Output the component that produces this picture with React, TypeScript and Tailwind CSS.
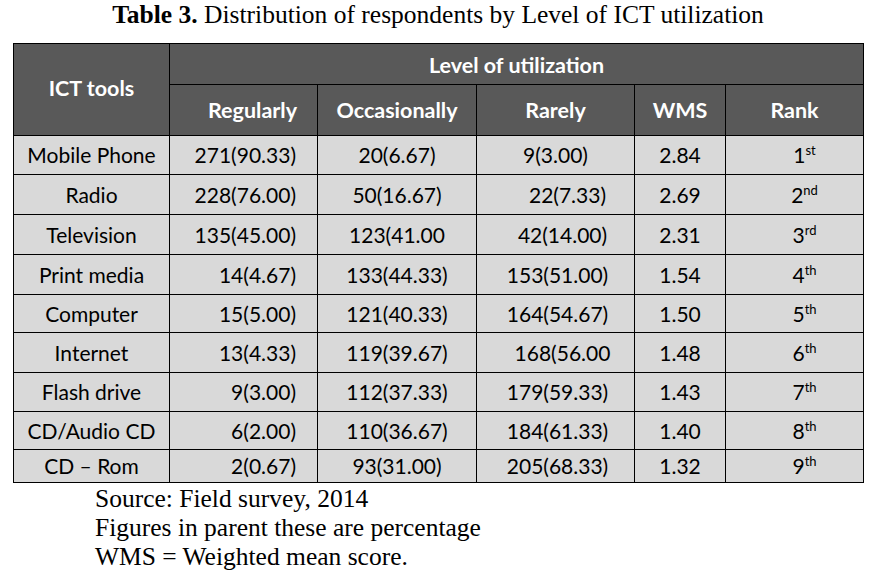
import React from "react";

type Row = {
  tool: string;
  reg: string;
  occ: string;
  rare: string;
  rareShift?: string;
  wms: string;
  rank: string;
  sup: string;
  h: string;
};

const rows: Row[] = [
  { tool: "Mobile Phone", reg: "271(90.33)", occ: "20(6.67)", rare: "9(3.00)", wms: "2.84", rank: "1", sup: "st", h: "h-[39px]" },
  { tool: "Radio", reg: "228(76.00)", occ: "50(16.67)", rare: "22(7.33)", rareShift: "pl-[24px]", wms: "2.69", rank: "2", sup: "nd", h: "h-[40px]" },
  { tool: "Television", reg: "135(45.00)", occ: "123(41.00", rare: "42(14.00)", rareShift: "pl-[14px]", wms: "2.31", rank: "3", sup: "rd", h: "h-[40px]" },
  { tool: "Print media", reg: "14(4.67)", occ: "133(44.33)", rare: "153(51.00)", rareShift: "pl-[4px]", wms: "1.54", rank: "4", sup: "th", h: "h-[40px]" },
  { tool: "Computer", reg: "15(5.00)", occ: "121(40.33)", rare: "164(54.67)", rareShift: "pl-[4px]", wms: "1.50", rank: "5", sup: "th", h: "h-[38px]" },
  { tool: "Internet", reg: "13(4.33)", occ: "119(39.67)", rare: "168(56.00", rareShift: "pl-[14px]", wms: "1.48", rank: "6", sup: "th", h: "h-[40px]" },
  { tool: "Flash drive", reg: "9(3.00)", occ: "112(37.33)", rare: "179(59.33)", rareShift: "pl-[4px]", wms: "1.43", rank: "7", sup: "th", h: "h-[39px]" },
  { tool: "CD/Audio CD", reg: "6(2.00)", occ: "110(36.67)", rare: "184(61.33)", rareShift: "pl-[4px]", wms: "1.40", rank: "8", sup: "th", h: "h-[38px]" },
  { tool: "CD \u2013 Rom", reg: "2(0.67)", occ: "93(31.00)", rare: "205(68.33)", rareShift: "pl-[4px]", wms: "1.32", rank: "9", sup: "th", h: "h-[30px]" },
];

const cell = "border border-black p-0 align-middle";

export default function App() {
  return (
    <div className="w-[873px] h-[573px] bg-white overflow-hidden pt-[1px] pl-[13px]">
      <div
        className="w-[850px] text-center text-[25.5px] leading-[28px] text-black"
        style={{ fontFamily: '"Liberation Serif", serif' }}
      >
        <span className="font-bold">Table 3.</span> Distribution of respondents by Level of ICT utilization
      </div>
      <table
        className="mt-[14px] border-collapse table-fixed w-[850px] text-[21px] text-black"
        style={{ fontFamily: 'Lato, "Open Sans", sans-serif' }}
      >
        <colgroup>
          <col className="w-[156px]" />
          <col className="w-[148px]" />
          <col className="w-[159px]" />
          <col className="w-[158px]" />
          <col className="w-[91px]" />
          <col className="w-[138px]" />
        </colgroup>
        <thead>
          <tr className="h-[41px] bg-[#595959] text-white font-bold text-[21.5px]">
            <th rowSpan={2} className={`${cell} text-center pb-[2px]`}>ICT tools</th>
            <th colSpan={5} className={`${cell} text-center pt-[2px]`}>Level of utilization</th>
          </tr>
          <tr className="h-[51px] bg-[#595959] text-white font-bold text-[21.5px]">
            <th className={`${cell} text-center pl-[18px]`}>Regularly</th>
            <th className={`${cell} text-center`}>Occasionally</th>
            <th className={`${cell} text-center`}>Rarely</th>
            <th className={`${cell} text-center`}>WMS</th>
            <th className={`${cell} text-center`}>Rank</th>
          </tr>
        </thead>
        <tbody className="bg-[#d9d9d9]">
          {rows.map((r) => (
            <tr key={r.tool} className={r.h}>
              <td className={`${cell} text-center`}>{r.tool}</td>
              <td className={`${cell} text-right pr-[21px]`}>{r.reg}</td>
              <td className={`${cell} text-center`}>{r.occ}</td>
              <td className={`${cell} text-center ${r.rareShift ?? ""}`}>{r.rare}</td>
              <td className={`${cell} text-center`}>{r.wms}</td>
              <td className={`${cell} text-center pl-[20px]`}>
                {r.rank}
                <sup className="text-[13px] relative top-[-8px]">{r.sup}</sup>
              </td>
            </tr>
          ))}
        </tbody>
      </table>
      <div
        className="pl-[82px] mt-[1px] text-[25.5px] leading-[29px] text-black"
        style={{ fontFamily: '"Liberation Serif", serif' }}
      >
        <div>Source: Field survey, 2014</div>
        <div>Figures in parent these are percentage</div>
        <div>WMS = Weighted mean score.</div>
      </div>
    </div>
  );
}
